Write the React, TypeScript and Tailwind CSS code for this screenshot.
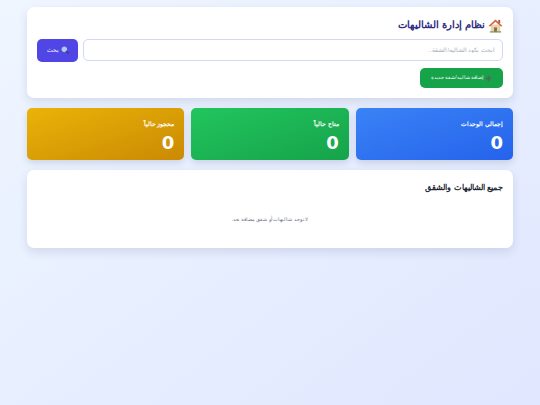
import React from 'react';

const font = { fontFamily: '"Liberation Sans", sans-serif' };

const HouseIcon = () => (
  <svg viewBox="0 0 16 16" className="w-[15px] h-[15px] shrink-0">
    <rect x="3" y="7" width="10" height="8" fill="#ecd2aa" />
    <path d="M8 1.5 L15.5 8.5 L13.8 9 L8 4 L2.2 9 L.5 8.5 Z" fill="#d2643f" />
    <rect x="11" y="2" width="2" height="3.5" fill="#b5533a" />
    <rect x="6.5" y="10" width="3" height="5" fill="#8a6a4a" />
    <rect x="2" y="14.2" width="12" height="1.3" fill="#6f9a5a" />
  </svg>
);

const SearchIcon = () => (
  <svg viewBox="0 0 12 12" className="w-[8px] h-[8px] shrink-0">
    <circle cx="5" cy="5" r="3.6" fill="#a8cdf5" stroke="#c9d3e6" strokeWidth="1.2" />
    <path d="M8 8 L11 11" stroke="#3b3f6b" strokeWidth="2" strokeLinecap="round" />
  </svg>
);

const PlusIcon = () => (
  <svg viewBox="0 0 10 10" className="w-[7px] h-[7px] shrink-0">
    <path d="M5 1 V9 M1 5 H9" stroke="#4b6b58" strokeWidth="2.4" />
  </svg>
);

const stats = [
  { label: 'إجمالي الوحدات', bg: 'bg-gradient-to-br from-[#3b82f6] to-[#2563eb]' },
  { label: 'متاح حالياً', bg: 'bg-gradient-to-br from-[#22c55e] to-[#16a34a]' },
  { label: 'محجوز حالياً', bg: 'bg-gradient-to-br from-[#eab308] to-[#ca8a04]' },
];

export default function App() {
  return (
    <div dir="rtl" style={font} className="min-h-[405px] bg-gradient-to-br from-[#eff6ff] to-[#e0e7ff] px-[27px] pt-[7px] pb-[10px]">
      <div className="bg-white rounded-[7px] shadow-[0_4px_10px_rgba(30,41,90,0.12)] h-[91px] px-[10px] pt-[10px] mb-[10px]">
        <h1 className="flex items-center gap-[3px] text-[10px] leading-[16px] font-bold text-[#312e81] mb-[6px]">
          <HouseIcon />
          <span>نظام إدارة الشاليهات</span>
        </h1>
        <div className="flex gap-[5px] mb-[7px] h-[22px] items-center">
          <input
            readOnly
            placeholder="ابحث بكود الشاليه/الشقة..."
            className="flex-1 h-[22px] rounded-[5px] border border-[#d4d8f8] bg-white px-[7px] text-[5.5px] outline-none placeholder:text-[#a8adb6]"
          />
          <button className="w-[41px] h-[23px] rounded-[5px] bg-[#4f46e5] text-white text-[6px] flex items-center justify-center gap-[2px]">
            <SearchIcon />
            <span>بحث</span>
          </button>
        </div>
        <div className="flex">
          <button className="w-[83px] h-[20px] rounded-[5px] bg-[#16a34a] text-white text-[5px] flex items-center justify-center gap-[2px]">
            <PlusIcon />
            <span>إضافة شاليه/شقة جديدة</span>
          </button>
        </div>
      </div>

      <div className="grid grid-cols-3 gap-[7px] mb-[10px]">
        {stats.map((s) => (
          <div key={s.label} className={`${s.bg} h-[52px] rounded-[5px] text-white shadow-[0_3px_7px_rgba(30,41,90,0.15)] px-[10px] pt-[11px]`}>
            <div className="text-[6px] leading-[11px] font-semibold">{s.label}</div>
            <div className="text-[18px] leading-[22px] font-bold mt-[2px]" style={{ fontFamily: '"DejaVu Sans", sans-serif' }}>0</div>
          </div>
        ))}
      </div>

      <div className="bg-white rounded-[7px] shadow-[0_4px_10px_rgba(30,41,90,0.12)] h-[78px] px-[10px] pt-[10px]">
        <h2 className="text-[8.3px] leading-[14px] font-bold text-[#1f2937]">جميع الشاليهات والشقق</h2>
        <p className="text-center text-[5.3px] leading-[10px] text-[#6b7280] mt-[20px]">لا توجد شاليهات أو شقق مضافة بعد.</p>
      </div>
    </div>
  );
}
